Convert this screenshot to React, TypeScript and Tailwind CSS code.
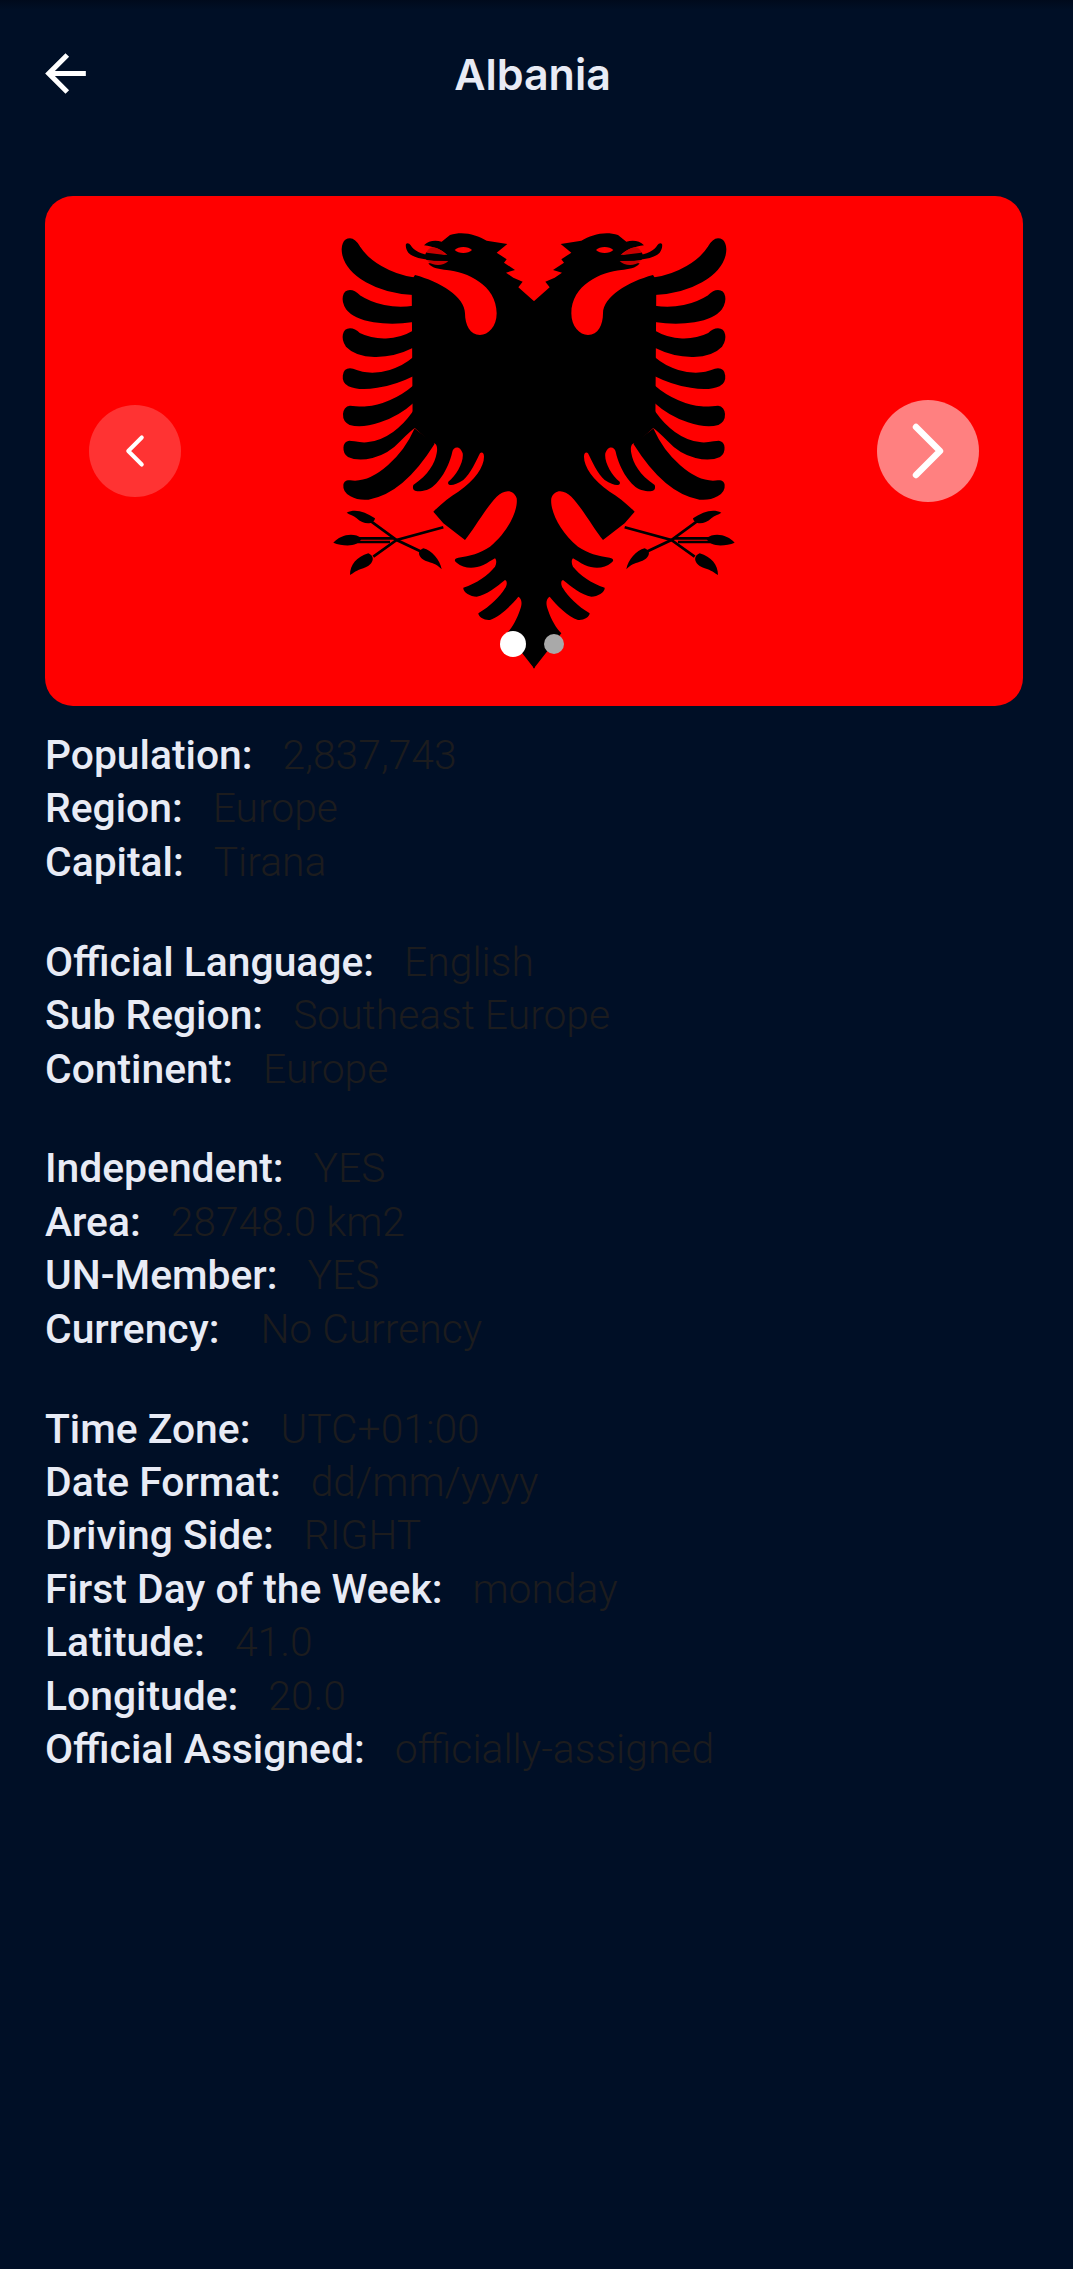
import React from "react";
import { ChevronLeft, ChevronRight } from "lucide-react";

type Row = { l: string; v: string; gap?: string };
const groups: Row[][] = [
  [
    { l: "Population:", v: "2,837,743" },
    { l: "Region:", v: "Europe" },
    { l: "Capital:", v: "Tirana" },
  ],
  [
    { l: "Official Language:", v: "English" },
    { l: "Sub Region:", v: "Southeast Europe" },
    { l: "Continent:", v: "Europe" },
  ],
  [
    { l: "Independent:", v: "YES" },
    { l: "Area:", v: "28748.0 km2" },
    { l: "UN-Member:", v: "YES" },
    { l: "Currency:", v: "No Currency", gap: "ml-[41px]" },
  ],
  [
    { l: "Time Zone:", v: "UTC+01:00" },
    { l: "Date Format:", v: "dd/mm/yyyy" },
    { l: "Driving Side:", v: "RIGHT" },
    { l: "First Day of the Week:", v: "monday" },
    { l: "Latitude:", v: "41.0" },
    { l: "Longitude:", v: "20.0" },
    { l: "Official Assigned:", v: "officially-assigned" },
  ],
];

function EagleHalf() {
  return (
    <g fill="#000">
      {/* head, neck, body, inner wing and tail outline */}
      <path d="M704 275 L655 232 L668 215 L640 203 L618 188 L645 180 L612 158 L620 148 L590 128 L622 102 L560 92 C530 75 490 62 450 75 L425 95 C405 90 385 92 372 106 C400 110 425 118 442 135 L385 125 C375 125 372 140 380 150 L440 158 L385 160 C395 175 420 178 440 180 C500 185 590 225 590 310 C590 350 565 375 540 375 C510 375 495 345 495 310 C495 260 420 215 345 195 L335 210 L338 650 L345 655 L395 700 C405 695 415 705 410 730 C405 760 385 795 340 825 C335 840 345 850 380 840 C410 830 445 780 457 725 C460 710 480 705 488 730 C492 755 470 795 445 815 C440 828 460 830 490 810 C510 795 530 750 540 730 C545 725 552 728 552 740 C552 770 525 810 475 845 C450 860 425 880 400 905 L430 940 L495 990 C520 960 560 890 590 860 C610 840 640 835 650 865 C655 900 625 965 570 1010 C540 1030 510 1038 475 1043 C462 1046 462 1053 470 1058 C490 1075 520 1078 550 1065 C565 1058 575 1050 585 1045 C590 1050 590 1060 585 1070 C565 1095 530 1120 490 1133 C488 1145 510 1160 530 1160 C560 1155 590 1130 615 1110 C622 1112 622 1125 615 1135 C600 1160 570 1190 535 1210 C535 1222 555 1232 570 1230 C600 1220 635 1185 655 1160 C665 1165 668 1180 660 1200 C650 1230 635 1255 620 1270 L702 1375 L704 1375 Z" />
      {/* eye and beak */}
      <path fill="#f00" d="M464 120 C475 108 505 108 516 120 C505 132 475 132 464 120 Z" />
      <path fill="#c80000" d="M400 112 C420 116 432 126 436 135 L380 128 C382 118 390 113 400 112 Z" />
      <path fill="#c80000" d="M382 152 L445 153 C430 168 400 170 382 152 Z" />
      <path d="M318 102 C322 98 328 100 332 106 C345 128 375 138 440 142 L440 151 C380 152 340 145 325 128 C319 120 316 110 318 102 Z" />
      {/* outer wing feathers */}
      <g stroke="#000" strokeWidth="6">
        <path d="M150 88 C132 88 124 108 130 135 C145 195 230 248 340 252 L340 205 C270 195 205 155 178 112 C170 98 162 88 150 88 Z" />
        <path d="M150 243 C130 243 124 270 140 295 C170 335 260 345 340 333 L340 290 C280 300 220 285 178 258 C168 248 160 243 150 243 Z" />
        <path d="M150 358 C130 358 124 385 140 408 C175 445 260 450 340 410 L340 365 C290 395 225 395 178 372 C168 362 160 358 150 358 Z" />
        <path d="M150 478 C128 478 124 512 145 525 C185 545 270 530 340 495 L340 445 C300 480 240 495 200 490 C180 490 165 478 150 478 Z" />
        <path d="M150 590 C128 592 124 630 150 642 C195 655 280 630 340 575 L340 530 C300 565 240 590 200 592 C180 595 165 590 150 590 Z" />
        <path d="M338 610 C310 650 260 695 200 700 C175 702 160 695 148 695 C130 697 128 725 145 738 C180 755 250 745 300 690 C320 670 330 660 345 650 Z" />
        <path d="M400 702 C370 750 300 850 205 866 C165 870 130 850 133 825 C135 812 150 812 165 815 C230 815 310 740 345 660 Z" />
      </g>
      {/* talons */}
      <g fill="none" stroke="#000" strokeWidth="8">
        <path d="M430 952 L290 990 L220 1040" />
        <path d="M205 928 L290 990 L385 1035" />
        <path d="M150 985 L285 985" />
        <path d="M150 996 L270 996" />
      </g>
      <path d="M140 908 C165 895 195 905 225 925 C222 945 190 945 170 925 C160 915 150 915 140 908 Z" />
      <path d="M100 998 C120 975 160 965 185 985 C175 1012 130 1010 100 998 Z" />
      <path d="M150 1095 C150 1065 170 1040 205 1030 C228 1040 220 1065 190 1075 C170 1080 160 1090 150 1095 Z" />
      <path d="M425 1078 C420 1050 395 1020 370 1015 C345 1025 360 1050 385 1055 C400 1060 415 1065 425 1078 Z" />
    </g>
  );
}

export default function App() {
  return (
    <div className="flex h-[2269px] w-[1073px] flex-col overflow-hidden bg-[#000f26] bg-[linear-gradient(#000a1c,#000f26_10px)] px-[45px]">
      <header className="flex h-[148px] items-center">
        <button className="-mt-[2px] -ml-[10px] h-[61px] w-[61px] text-white" aria-label="Back">
          <svg viewBox="0 0 24 24" className="h-[61px] w-[61px]" fill="currentColor">
            <path d="M20 11H7.83l5.59-5.59L12 4l-8 8 8 8 1.41-1.41L7.83 13H20v-2z" />
          </svg>
        </button>
        <h1 className="flex-1 pr-[59px] text-center font-['Inter',sans-serif] text-[43px] leading-none font-semibold text-[#e8ebf5]">
          Albania
        </h1>
      </header>

      <section className="relative mt-[48px] h-[510px] w-[978px] overflow-hidden rounded-[28px] bg-[#ff0000]">
        <svg viewBox="-765 -42 2934 1530" className="h-full w-full">
          <EagleHalf />
          <g transform="translate(1404,0) scale(-1,1)">
            <EagleHalf />
          </g>
        </svg>
        <div className="absolute top-[209px] left-[44px] flex h-[92px] w-[92px] items-center justify-center rounded-full bg-white/20 text-white">
          <ChevronLeft size={54} strokeWidth={1.8} />
        </div>
        <div className="absolute top-[204px] left-[832px] flex h-[102px] w-[102px] items-center justify-center rounded-full bg-white/50 text-white">
          <ChevronRight size={96} strokeWidth={1.6} />
        </div>
        <div className="absolute top-[435px] left-[455px] flex items-center gap-[18px]">
          <span className="h-[26px] w-[26px] rounded-full bg-white" />
          <span className="h-[20px] w-[20px] rounded-full bg-[#a9a9a9]" />
        </div>
      </section>

      <div className="mt-[23px] flex flex-col gap-[46.5px] font-['Roboto',sans-serif] text-[40.8px] leading-[53.4px]">
        {groups.map((g, i) => (
          <div key={i}>
            {g.map((r) => (
              <div key={r.l} className="flex whitespace-nowrap">
                <span className="font-medium text-[#e8ebf5]">{r.l}</span>
                <span className={`${r.gap ?? "ml-[30px]"} font-light text-[#1c1c1e]`}>{r.v}</span>
              </div>
            ))}
          </div>
        ))}
      </div>
    </div>
  );
}
